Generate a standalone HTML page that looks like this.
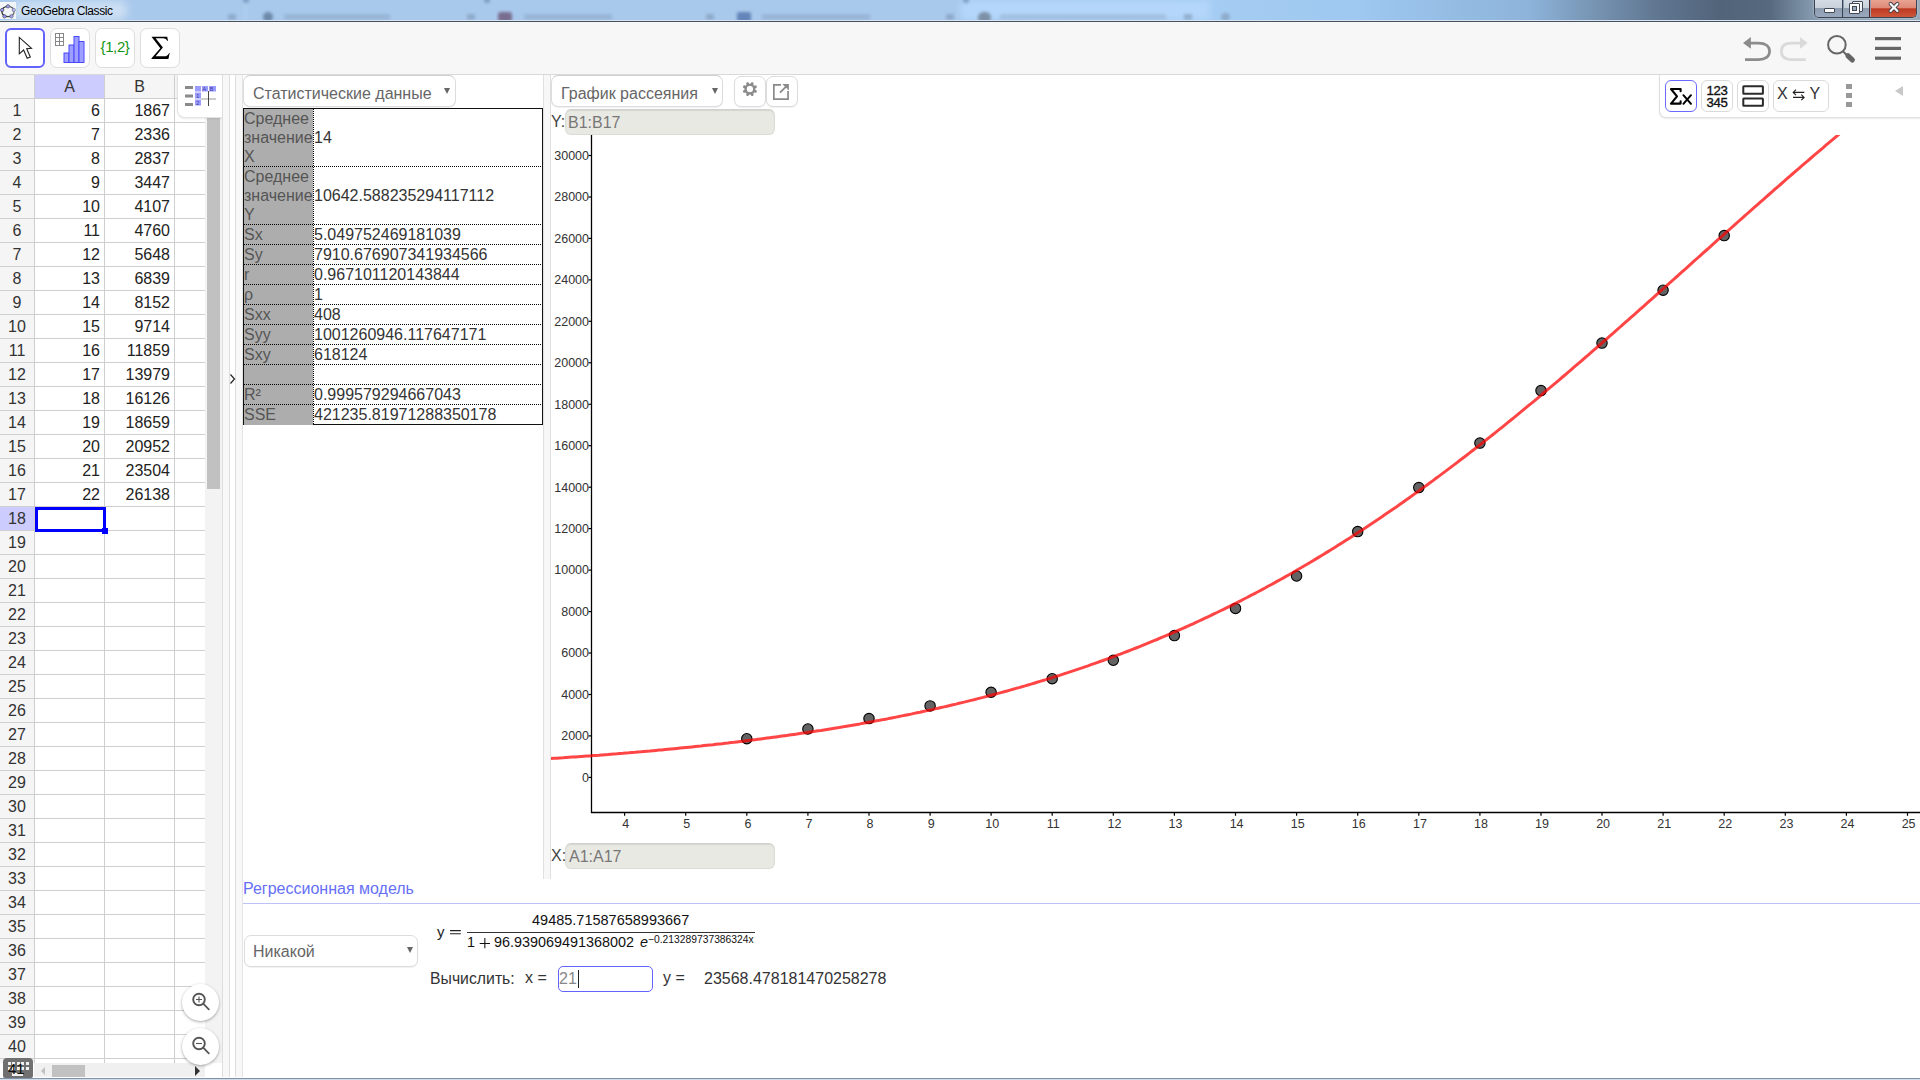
<!DOCTYPE html>
<html><head><meta charset="utf-8">
<style>
*{margin:0;padding:0;box-sizing:border-box}
html,body{width:1920px;height:1080px;overflow:hidden;background:#fff;font-family:"Liberation Sans",sans-serif;color:#333}
.a{position:absolute}
#title{left:0;top:0;width:1920px;height:22px;overflow:hidden;background:linear-gradient(90deg,#a9c9ec 0px,#a8c8ec 960px,#a6cdf3 1200px,#9ec8f0 1360px,#8db3da 1530px,#7896b5 1590px,#5f7590 1660px,#52647a 1720px,#56697f 1770px,#8599ae 1812px,#9aaabb 1920px)}
.blur{filter:blur(1.6px)}
.tbtn{position:absolute;top:28px;width:40px;height:40px;border:1px solid #dedede;border-radius:7px;background:#fff}
.hdr{position:absolute;background:#f5f5f5;color:#333;font-size:16px;text-align:center;line-height:23px}
.cv{position:absolute;font-size:16px;color:#222;text-align:right;line-height:23px}
.hl{position:absolute;left:0;width:205px;height:1px;background:#cfcfcf}
.vl{position:absolute;top:75px;width:1px;height:988px;background:#cfcfcf}
.dd{position:absolute;background:#fff;border:1px solid #dcdcdc;border-radius:7px;box-shadow:0 1px 1px rgba(0,0,0,0.06);font-size:16px;color:#666}
.dd .t{position:absolute;left:9px;top:6px;white-space:nowrap}
.dd .ar{position:absolute;width:0;height:0;border-left:3px solid transparent;border-right:3px solid transparent;border-top:6px solid #666}
.st{position:absolute;left:244px;width:298px;font-size:16px}
.sh{position:absolute;left:0;top:0;width:69px;height:100%;background:#adadad;color:#555;line-height:19px;white-space:nowrap;overflow:hidden}
.sv{position:absolute;left:70px;color:#333;white-space:nowrap}
.dot{position:absolute;left:0;width:298px;height:1px;background:repeating-linear-gradient(90deg,#000 0 1px,transparent 1px 2px)}
.sb{position:absolute;top:80px;width:32px;height:32px;border:1px solid #dadada;border-radius:6px;background:#fff}
.fld{position:absolute;left:565px;width:210px;height:26px;background:#e9e9e3;border:1px solid #dcdcd6;border-top-color:#d0d0cc;box-shadow:inset 0 1px 1px rgba(0,0,0,.08);border-radius:6px;color:#777;font-size:15px}
.tk{position:absolute;font-size:12px;color:#222;white-space:nowrap}
</style></head>
<body>
<div id="title" class="a">
 <div class="a" style="left:960px;top:0;width:250px;height:20px;background:#b3d6fa;filter:blur(3px)"></div>
 <div class="a blur" style="left:228px;top:14px;width:8px;height:6px;background:#7f98b5;opacity:.6"></div>
 <div class="a blur" style="left:244px;top:0;width:3px;height:20px;background:#c0dcf5;opacity:.3"></div>
 <div class="a blur" style="left:243px;top:-2px;width:6px;height:5px;border-radius:3px;background:#5f7fa8;opacity:.6"></div>
 <div class="a blur" style="left:263px;top:12px;width:10px;height:10px;border-radius:5px;background:#55708f;opacity:.7"></div>
 <div class="a blur" style="left:284px;top:14px;width:106px;height:6px;background:#8ca7c6;opacity:.55"></div>
 <div class="a blur" style="left:467px;top:14px;width:8px;height:6px;background:#7f98b5;opacity:.6"></div>
 <div class="a blur" style="left:484px;top:-2px;width:6px;height:5px;border-radius:3px;background:#5f7fa8;opacity:.6"></div>
 <div class="a blur" style="left:498px;top:12px;width:14px;height:10px;border-radius:3px;background:#6a5070;opacity:.75"></div>
 <div class="a blur" style="left:524px;top:14px;width:88px;height:6px;background:#8ca7c6;opacity:.55"></div>
 <div class="a blur" style="left:706px;top:14px;width:8px;height:6px;background:#7f98b5;opacity:.6"></div>
 <div class="a blur" style="left:737px;top:12px;width:14px;height:10px;border-radius:2px;background:#4d6fa8;opacity:.75"></div>
 <div class="a blur" style="left:762px;top:14px;width:108px;height:6px;background:#8ca7c6;opacity:.55"></div>
 <div class="a blur" style="left:946px;top:14px;width:8px;height:6px;background:#7f98b5;opacity:.6"></div>
 <div class="a blur" style="left:963px;top:-2px;width:6px;height:5px;border-radius:3px;background:#5f7fa8;opacity:.6"></div>
 <div class="a blur" style="left:978px;top:12px;width:13px;height:11px;border-radius:6px;background:#6b7a8c;opacity:.75"></div>
 <div class="a blur" style="left:1000px;top:14px;width:166px;height:6px;background:#97b3d2;opacity:.55"></div>
 <div class="a blur" style="left:1184px;top:14px;width:8px;height:6px;background:#7f98b5;opacity:.6"></div>
 <div class="a blur" style="left:1221px;top:13px;width:9px;height:8px;border-radius:4px;background:#7f98b5;opacity:.6"></div>
 <div class="a" style="left:0;top:2px;width:16px;height:17px;background:#f4f6f8"></div>
 <svg class="a" style="left:0;top:2px" width="18" height="18" viewBox="0 0 18 18">
  <ellipse cx="8" cy="9.5" rx="6.2" ry="5.2" fill="none" stroke="#333" stroke-width="1.3"/>
  <circle cx="8" cy="4.3" r="1.7" fill="#99f" stroke="#333" stroke-width=".6"/>
  <circle cx="2.2" cy="8" r="1.7" fill="#99f" stroke="#333" stroke-width=".6"/>
  <circle cx="13.8" cy="8" r="1.7" fill="#99f" stroke="#333" stroke-width=".6"/>
  <circle cx="4.5" cy="14.3" r="1.7" fill="#99f" stroke="#333" stroke-width=".6"/>
  <circle cx="11.5" cy="14.3" r="1.7" fill="#99f" stroke="#333" stroke-width=".6"/>
 </svg>
 <div class="a" style="left:12px;top:1px;width:115px;height:19px;background:rgba(235,243,250,.55);filter:blur(4px);border-radius:8px"></div><div class="a" style="left:21px;top:3.5px;font-size:12px;color:#000;white-space:nowrap;letter-spacing:-0.4px">GeoGebra Classic</div>
 <div class="a" style="left:1814px;top:-1px;width:103px;height:19px;border:1px solid #3b4452;border-top:none;border-radius:0 0 5px 5px;overflow:hidden;box-shadow:0 0 2px rgba(255,255,255,.7)">
  <div class="a" style="left:0;top:0;width:28px;height:19px;background:linear-gradient(#d6dde6 0%,#c9d1db 45%,#8f9db0 50%,#9aaac0 100%);border-right:1px solid #3b4452"></div>
  <div class="a" style="left:29px;top:0;width:26px;height:19px;background:linear-gradient(#d6dde6 0%,#c9d1db 45%,#8f9db0 50%,#9aaac0 100%);border-right:1px solid #50222a"></div>
  <div class="a" style="left:56px;top:0;width:47px;height:19px;background:linear-gradient(#e9a696 0%,#df8a78 45%,#bd3a22 52%,#cf5a3e 100%)"></div>
  <div class="a" style="left:9px;top:9px;width:11px;height:5px;background:#fafafa;border:1px solid #404858;border-radius:1px"></div>
  <div class="a" style="left:37px;top:2px;width:11px;height:11px;border:1px solid #404858;background:#f2f2f2;border-radius:1px"></div>
  <div class="a" style="left:34px;top:4px;width:11px;height:11px;border:1px solid #404858;background:#fafafa;border-radius:1px"></div>
  <div class="a" style="left:37px;top:7px;width:5px;height:5px;border:1px solid #404858;background:#9aaabb"></div>
  <svg class="a" style="left:71px;top:2px" width="16" height="13" viewBox="0 0 16 13"><path d="M4.6 2.9 L11.4 9.9 M11.4 2.9 L4.6 9.9" stroke="#3a3f4a" stroke-width="4" stroke-linecap="round"/><path d="M4.6 2.9 L11.4 9.9 M11.4 2.9 L4.6 9.9" stroke="#fafafa" stroke-width="2.2" stroke-linecap="round"/></svg>
 </div>
 <div class="a" style="left:0;top:20px;width:1920px;height:1px;background:#d8e4f0"></div>
 <div class="a" style="left:0;top:21px;width:1920px;height:1px;background:#46525f"></div>
</div>
<div class="a" style="left:0;top:22px;width:1920px;height:53px;background:#f7f7f7;border-bottom:1px solid #d9d9d9"></div>
<div class="tbtn" style="left:5px;border:2.5px solid #6262ff;border-radius:6px"></div>
<svg class="a" style="left:17px;top:35px" width="18" height="26" viewBox="0 0 18 26"><path d="M2.3 2.4 L2.3 18.8 L6.6 15 L10.2 23.2 L13.3 22 L9.7 13.7 L14.5 13.3 Z" fill="#fff" stroke="#222" stroke-width="1.1" stroke-linejoin="miter"/></svg>
<div class="tbtn" style="left:50px"></div>
<svg class="a" style="left:50px;top:28px" width="40" height="40" viewBox="0 0 40 40">
 <rect x="5.5" y="5.5" width="8" height="12" fill="#fff" stroke="#888" stroke-width="1"/>
 <path d="M9.5 5.5 V17.5 M5.5 9.5 H13.5 M5.5 13.5 H13.5" stroke="#888" stroke-width="1"/>
 <rect x="14" y="25" width="5" height="9.5" fill="#9f9fff" stroke="#4848ff" stroke-width="1"/>
 <rect x="19" y="17" width="5" height="17.5" fill="#9f9fff" stroke="#4848ff" stroke-width="1"/>
 <rect x="24" y="8.5" width="5" height="26" fill="#9f9fff" stroke="#4848ff" stroke-width="1"/>
 <rect x="29" y="13.5" width="5" height="21" fill="#9f9fff" stroke="#4848ff" stroke-width="1"/>
</svg>
<div class="tbtn" style="left:95px"></div>
<div class="a" style="left:99px;top:37.5px;width:32px;text-align:center;font-size:15px;color:#149614;white-space:nowrap;letter-spacing:-0.4px">{1,2}</div>
<div class="tbtn" style="left:140px"></div>
<svg class="a" style="left:140px;top:28px" width="40" height="40" viewBox="140 28 40 40"><path d="M151.5 36.8 H167.2 L168 40.8 H167.2 Q166.3 38.3 163.5 38.3 H155.6 L162.9 47.5 L155.6 56.2 H165.8 Q167.8 56.2 169.2 53 H169.7 L168.4 58.9 H151.5 V58.3 L160.3 48.3 Z" fill="#000"/></svg>
<!-- right toolbar -->
<svg class="a" style="left:1736px;top:30px" width="180" height="40" viewBox="1736 30 180 40">
 <path d="M1749 43.2 H1758.5 C1765.5 43.2 1769.6 46.2 1769.6 51.3 C1769.6 56.5 1765.5 59.6 1758.5 59.6 H1745" fill="none" stroke="#8c8c8c" stroke-width="2.7"/>
 <path d="M1743 43 L1750.9 37 L1750.9 48.8 Z" fill="#8c8c8c"/>
 <path d="M1800.5 43.2 H1791.5 C1784.5 43.2 1781.4 46.2 1781.4 51.3 C1781.4 56.5 1784.5 59.6 1791.5 59.6 H1805.8" fill="none" stroke="#dadada" stroke-width="2.7"/>
 <path d="M1807.6 43 L1800 37 L1800 48.8 Z" fill="#dadada"/>
 <circle cx="1836.9" cy="44.8" r="8.8" fill="none" stroke="#666" stroke-width="2"/>
 <path d="M1842.8 51.2 L1847 55.2" stroke="#666" stroke-width="2"/><path d="M1848 55.8 L1852.3 59.9" stroke="#666" stroke-width="5.2" stroke-linecap="round"/>
 <rect x="1875" y="37" width="26" height="3.2" fill="#666"/>
 <rect x="1875" y="46.8" width="26" height="3.2" fill="#666"/>
 <rect x="1875" y="56.6" width="26" height="3.2" fill="#666"/>
</svg>
<div class="a" style="left:0;top:75px;width:205px;height:988px;background:#fff;overflow:hidden">
<div class="hdr" style="left:0;top:0;width:34px;height:23px"></div>
<div class="hdr" style="left:35px;top:0;width:69px;height:23px;background:#ccccff">A</div>
<div class="hdr" style="left:105px;top:0;width:69px;height:23px">B</div>
<div class="hdr" style="left:175px;top:0;width:30px;height:23px"></div>
<div class="hdr" style="left:0;top:24px;width:34px;height:23px;background:#f5f5f5">1</div>
<div class="cv" style="left:35px;top:24px;width:65px;height:23px">6</div>
<div class="cv" style="left:105px;top:24px;width:65px;height:23px">1867</div>
<div class="hdr" style="left:0;top:48px;width:34px;height:23px;background:#f5f5f5">2</div>
<div class="cv" style="left:35px;top:48px;width:65px;height:23px">7</div>
<div class="cv" style="left:105px;top:48px;width:65px;height:23px">2336</div>
<div class="hdr" style="left:0;top:72px;width:34px;height:23px;background:#f5f5f5">3</div>
<div class="cv" style="left:35px;top:72px;width:65px;height:23px">8</div>
<div class="cv" style="left:105px;top:72px;width:65px;height:23px">2837</div>
<div class="hdr" style="left:0;top:96px;width:34px;height:23px;background:#f5f5f5">4</div>
<div class="cv" style="left:35px;top:96px;width:65px;height:23px">9</div>
<div class="cv" style="left:105px;top:96px;width:65px;height:23px">3447</div>
<div class="hdr" style="left:0;top:120px;width:34px;height:23px;background:#f5f5f5">5</div>
<div class="cv" style="left:35px;top:120px;width:65px;height:23px">10</div>
<div class="cv" style="left:105px;top:120px;width:65px;height:23px">4107</div>
<div class="hdr" style="left:0;top:144px;width:34px;height:23px;background:#f5f5f5">6</div>
<div class="cv" style="left:35px;top:144px;width:65px;height:23px">11</div>
<div class="cv" style="left:105px;top:144px;width:65px;height:23px">4760</div>
<div class="hdr" style="left:0;top:168px;width:34px;height:23px;background:#f5f5f5">7</div>
<div class="cv" style="left:35px;top:168px;width:65px;height:23px">12</div>
<div class="cv" style="left:105px;top:168px;width:65px;height:23px">5648</div>
<div class="hdr" style="left:0;top:192px;width:34px;height:23px;background:#f5f5f5">8</div>
<div class="cv" style="left:35px;top:192px;width:65px;height:23px">13</div>
<div class="cv" style="left:105px;top:192px;width:65px;height:23px">6839</div>
<div class="hdr" style="left:0;top:216px;width:34px;height:23px;background:#f5f5f5">9</div>
<div class="cv" style="left:35px;top:216px;width:65px;height:23px">14</div>
<div class="cv" style="left:105px;top:216px;width:65px;height:23px">8152</div>
<div class="hdr" style="left:0;top:240px;width:34px;height:23px;background:#f5f5f5">10</div>
<div class="cv" style="left:35px;top:240px;width:65px;height:23px">15</div>
<div class="cv" style="left:105px;top:240px;width:65px;height:23px">9714</div>
<div class="hdr" style="left:0;top:264px;width:34px;height:23px;background:#f5f5f5">11</div>
<div class="cv" style="left:35px;top:264px;width:65px;height:23px">16</div>
<div class="cv" style="left:105px;top:264px;width:65px;height:23px">11859</div>
<div class="hdr" style="left:0;top:288px;width:34px;height:23px;background:#f5f5f5">12</div>
<div class="cv" style="left:35px;top:288px;width:65px;height:23px">17</div>
<div class="cv" style="left:105px;top:288px;width:65px;height:23px">13979</div>
<div class="hdr" style="left:0;top:312px;width:34px;height:23px;background:#f5f5f5">13</div>
<div class="cv" style="left:35px;top:312px;width:65px;height:23px">18</div>
<div class="cv" style="left:105px;top:312px;width:65px;height:23px">16126</div>
<div class="hdr" style="left:0;top:336px;width:34px;height:23px;background:#f5f5f5">14</div>
<div class="cv" style="left:35px;top:336px;width:65px;height:23px">19</div>
<div class="cv" style="left:105px;top:336px;width:65px;height:23px">18659</div>
<div class="hdr" style="left:0;top:360px;width:34px;height:23px;background:#f5f5f5">15</div>
<div class="cv" style="left:35px;top:360px;width:65px;height:23px">20</div>
<div class="cv" style="left:105px;top:360px;width:65px;height:23px">20952</div>
<div class="hdr" style="left:0;top:384px;width:34px;height:23px;background:#f5f5f5">16</div>
<div class="cv" style="left:35px;top:384px;width:65px;height:23px">21</div>
<div class="cv" style="left:105px;top:384px;width:65px;height:23px">23504</div>
<div class="hdr" style="left:0;top:408px;width:34px;height:23px;background:#f5f5f5">17</div>
<div class="cv" style="left:35px;top:408px;width:65px;height:23px">22</div>
<div class="cv" style="left:105px;top:408px;width:65px;height:23px">26138</div>
<div class="hdr" style="left:0;top:432px;width:34px;height:23px;background:#ccccff">18</div>
<div class="hdr" style="left:0;top:456px;width:34px;height:23px;background:#f5f5f5">19</div>
<div class="hdr" style="left:0;top:480px;width:34px;height:23px;background:#f5f5f5">20</div>
<div class="hdr" style="left:0;top:504px;width:34px;height:23px;background:#f5f5f5">21</div>
<div class="hdr" style="left:0;top:528px;width:34px;height:23px;background:#f5f5f5">22</div>
<div class="hdr" style="left:0;top:552px;width:34px;height:23px;background:#f5f5f5">23</div>
<div class="hdr" style="left:0;top:576px;width:34px;height:23px;background:#f5f5f5">24</div>
<div class="hdr" style="left:0;top:600px;width:34px;height:23px;background:#f5f5f5">25</div>
<div class="hdr" style="left:0;top:624px;width:34px;height:23px;background:#f5f5f5">26</div>
<div class="hdr" style="left:0;top:648px;width:34px;height:23px;background:#f5f5f5">27</div>
<div class="hdr" style="left:0;top:672px;width:34px;height:23px;background:#f5f5f5">28</div>
<div class="hdr" style="left:0;top:696px;width:34px;height:23px;background:#f5f5f5">29</div>
<div class="hdr" style="left:0;top:720px;width:34px;height:23px;background:#f5f5f5">30</div>
<div class="hdr" style="left:0;top:744px;width:34px;height:23px;background:#f5f5f5">31</div>
<div class="hdr" style="left:0;top:768px;width:34px;height:23px;background:#f5f5f5">32</div>
<div class="hdr" style="left:0;top:792px;width:34px;height:23px;background:#f5f5f5">33</div>
<div class="hdr" style="left:0;top:816px;width:34px;height:23px;background:#f5f5f5">34</div>
<div class="hdr" style="left:0;top:840px;width:34px;height:23px;background:#f5f5f5">35</div>
<div class="hdr" style="left:0;top:864px;width:34px;height:23px;background:#f5f5f5">36</div>
<div class="hdr" style="left:0;top:888px;width:34px;height:23px;background:#f5f5f5">37</div>
<div class="hdr" style="left:0;top:912px;width:34px;height:23px;background:#f5f5f5">38</div>
<div class="hdr" style="left:0;top:936px;width:34px;height:23px;background:#f5f5f5">39</div>
<div class="hdr" style="left:0;top:960px;width:34px;height:23px;background:#f5f5f5">40</div>
<div class="hdr" style="left:0;top:984px;width:34px;height:23px;background:#f5f5f5">41</div>
<div class="hl" style="top:23px"></div>
<div class="hl" style="top:47px"></div>
<div class="hl" style="top:71px"></div>
<div class="hl" style="top:95px"></div>
<div class="hl" style="top:119px"></div>
<div class="hl" style="top:143px"></div>
<div class="hl" style="top:167px"></div>
<div class="hl" style="top:191px"></div>
<div class="hl" style="top:215px"></div>
<div class="hl" style="top:239px"></div>
<div class="hl" style="top:263px"></div>
<div class="hl" style="top:287px"></div>
<div class="hl" style="top:311px"></div>
<div class="hl" style="top:335px"></div>
<div class="hl" style="top:359px"></div>
<div class="hl" style="top:383px"></div>
<div class="hl" style="top:407px"></div>
<div class="hl" style="top:431px"></div>
<div class="hl" style="top:455px"></div>
<div class="hl" style="top:479px"></div>
<div class="hl" style="top:503px"></div>
<div class="hl" style="top:527px"></div>
<div class="hl" style="top:551px"></div>
<div class="hl" style="top:575px"></div>
<div class="hl" style="top:599px"></div>
<div class="hl" style="top:623px"></div>
<div class="hl" style="top:647px"></div>
<div class="hl" style="top:671px"></div>
<div class="hl" style="top:695px"></div>
<div class="hl" style="top:719px"></div>
<div class="hl" style="top:743px"></div>
<div class="hl" style="top:767px"></div>
<div class="hl" style="top:791px"></div>
<div class="hl" style="top:815px"></div>
<div class="hl" style="top:839px"></div>
<div class="hl" style="top:863px"></div>
<div class="hl" style="top:887px"></div>
<div class="hl" style="top:911px"></div>
<div class="hl" style="top:935px"></div>
<div class="hl" style="top:959px"></div>
<div class="hl" style="top:983px"></div>
<div class="hl" style="top:1007px"></div>
<div class="a" style="left:34px;top:0;width:1px;height:988px;background:#cfcfcf"></div>
<div class="a" style="left:104px;top:0;width:1px;height:988px;background:#cfcfcf"></div>
<div class="a" style="left:174px;top:0;width:1px;height:988px;background:#cfcfcf"></div>
</div>
<div class="a" style="left:35px;top:507px;width:71px;height:25px;border:3px solid #0000ff"></div>
<div class="a" style="left:102px;top:528px;width:6px;height:6px;background:#0000ff"></div>
<div class="a" style="left:205px;top:75px;width:17px;height:988px;background:#f3f3f3"></div>
<div class="a" style="left:207px;top:75px;width:13px;height:414px;background:#c1c1c1"></div>
<div class="a" style="left:34px;top:1063px;width:171px;height:14px;background:#f0f0f0"></div>
<div class="a" style="left:205px;top:1063px;width:17px;height:14px;background:#fff"></div>
<div class="a" style="left:52px;top:1065px;width:33px;height:12px;background:#c1c1c1"></div>
<div class="a" style="left:41px;top:1067px;width:0;height:0;border-top:4px solid transparent;border-bottom:4px solid transparent;border-right:4px solid #c0c0c0"></div>
<div class="a" style="left:195px;top:1066px;width:0;height:0;border-top:5px solid transparent;border-bottom:5px solid transparent;border-left:5px solid #333"></div>
<div class="a" style="left:3px;top:1057.5px;width:30px;height:20px;background:#707070;border-radius:4px 4px 2px 2px"></div>
<div class="a" style="left:7.5px;top:1062.0px;width:3px;height:3px;background:#f0f0f0"></div>
<div class="a" style="left:12.0px;top:1062.0px;width:3px;height:3px;background:#f0f0f0"></div>
<div class="a" style="left:16.5px;top:1062.0px;width:3px;height:3px;background:#f0f0f0"></div>
<div class="a" style="left:21.0px;top:1062.0px;width:3px;height:3px;background:#f0f0f0"></div>
<div class="a" style="left:25.5px;top:1062.0px;width:3px;height:3px;background:#f0f0f0"></div>
<div class="a" style="left:7.5px;top:1066.5px;width:3px;height:3px;background:#f0f0f0"></div>
<div class="a" style="left:12.0px;top:1066.5px;width:3px;height:3px;background:#f0f0f0"></div>
<div class="a" style="left:16.5px;top:1066.5px;width:3px;height:3px;background:#f0f0f0"></div>
<div class="a" style="left:21.0px;top:1066.5px;width:3px;height:3px;background:#f0f0f0"></div>
<div class="a" style="left:25.5px;top:1066.5px;width:3px;height:3px;background:#f0f0f0"></div>
<div class="a" style="left:12px;top:1073px;width:11px;height:2.5px;background:#f0f0f0"></div>
<div class="a" style="left:8px;top:1060px;font-size:15px;color:#111;line-height:18px;height:17px;overflow:hidden">41</div>
<div class="a" style="left:182px;top:984px;width:37px;height:37px;border-radius:50%;background:#fff;box-shadow:0 1px 3px rgba(0,0,0,.35)"></div>
<svg class="a" style="left:182px;top:984px" width="37" height="37" viewBox="182 984 37 37"><circle cx="199" cy="999.5" r="5.8" fill="none" stroke="#555" stroke-width="1.9"/><path d="M203.2 1003.7 L208.8 1009.3" stroke="#555" stroke-width="1.8" stroke-linecap="round"/><path d="M196 999.5 H202 M199 996.5 V1002.5" stroke="#555" stroke-width="1.1"/></svg>
<div class="a" style="left:182px;top:1028px;width:37px;height:37px;border-radius:50%;background:#fff;box-shadow:0 1px 3px rgba(0,0,0,.35)"></div>
<svg class="a" style="left:182px;top:1028px" width="37" height="37" viewBox="182 1028 37 37"><circle cx="199" cy="1043.5" r="5.8" fill="none" stroke="#555" stroke-width="1.9"/><path d="M203.2 1047.7 L208.8 1053.3" stroke="#555" stroke-width="1.8" stroke-linecap="round"/><path d="M196 1043.5 H202" stroke="#555" stroke-width="1.1"/></svg>
<div class="a" style="left:177px;top:75px;width:46px;height:43px;background:#fff;border:1px solid #e3e3e3;border-top:none;border-radius:0 0 0 8px;box-shadow:0 1px 2px rgba(0,0,0,.08)"></div>
<svg class="a" style="left:177px;top:75px" width="46" height="42" viewBox="177 75 46 42">
 <rect x="185" y="86" width="8" height="3" fill="#8a8a8a"/><rect x="185" y="94.5" width="8" height="3" fill="#8a8a8a"/><rect x="185" y="103" width="8" height="3" fill="#8a8a8a"/>
 <rect x="195" y="86" width="6" height="5.5" fill="#9c9cff"/><rect x="195" y="92.5" width="6" height="6" fill="#9c9cff"/><rect x="195" y="99.5" width="6" height="6" fill="#9c9cff"/>
 <rect x="202" y="86" width="6" height="5.5" fill="#9c9cff"/><rect x="209" y="86" width="7" height="5.5" fill="#9c9cff"/>
 <path d="M201 99 H216" stroke="#999" stroke-width="1"/><path d="M208.5 91 V106" stroke="#444" stroke-width="1"/>
 <text x="196.3" y="97.8" font-size="5.5" fill="#3a3a9a" font-family="Liberation Sans">1</text>
 <text x="196.3" y="104.8" font-size="5.5" fill="#3a3a9a" font-family="Liberation Sans">2</text>
 <text x="202.5" y="90.8" font-size="5.5" fill="#3a3a9a" font-family="Liberation Sans">A</text>
 <text x="209.8" y="90.8" font-size="5.5" fill="#3a3a9a" font-family="Liberation Sans">B</text>
</svg>
<div class="a" style="left:222px;top:75px;width:21px;height:1002px;background:#f8f8f8"></div>
<div class="a" style="left:222px;top:75px;width:1px;height:1002px;background:#dedede"></div>
<div class="a" style="left:229px;top:75px;width:1px;height:1002px;background:#dedede"></div>
<div class="a" style="left:230px;top:75px;width:5px;height:1002px;background:#fff"></div>
<div class="a" style="left:235px;top:75px;width:1px;height:1002px;background:#dedede"></div>
<div class="a" style="left:242px;top:75px;width:1px;height:1002px;background:#e4e4e4"></div>
<svg class="a" style="left:229px;top:373px" width="8" height="12" viewBox="0 0 8 12"><path d="M1.5 1.5 L5.5 6 L1.5 10.5" fill="none" stroke="#222" stroke-width="1.2"/></svg><div class="a" style="left:243px;top:75px;width:300px;height:803px;background:#fff"></div>
<div class="dd" style="left:243px;top:75px;width:213px;height:32px;border-top-color:#d0d0d0"><div class="t" style="top:8.5px">Статистические данные</div><div class="ar" style="left:200px;top:12px"></div></div>
<div class="a" style="left:243px;top:108px;width:300px;height:317px;border:1px solid #111;background:#fff"></div>
<div class="st" style="top:109px;height:58px">
<div class="sh" style="padding-top:0px">Среднее<br>значение<br>X</div>
<div class="sv" style="top:19px;line-height:19px">14</div>
</div>
<div class="dot" style="left:244px;top:166px"></div>
<div class="st" style="top:167px;height:58px">
<div class="sh" style="padding-top:0px">Среднее<br>значение<br>Y</div>
<div class="sv" style="top:19px;line-height:19px">10642.588235294117112</div>
</div>
<div class="dot" style="left:244px;top:224px"></div>
<div class="st" style="top:225px;height:20px">
<div class="sh" style="padding-top:0px">Sx</div>
<div class="sv" style="top:0;line-height:19px">5.049752469181039</div>
</div>
<div class="dot" style="left:244px;top:244px"></div>
<div class="st" style="top:245px;height:20px">
<div class="sh" style="padding-top:0px">Sy</div>
<div class="sv" style="top:0;line-height:19px">7910.676907341934566</div>
</div>
<div class="dot" style="left:244px;top:264px"></div>
<div class="st" style="top:265px;height:20px">
<div class="sh" style="padding-top:0px">r</div>
<div class="sv" style="top:0;line-height:19px">0.967101120143844</div>
</div>
<div class="dot" style="left:244px;top:284px"></div>
<div class="st" style="top:285px;height:20px">
<div class="sh" style="padding-top:0px">ρ</div>
<div class="sv" style="top:0;line-height:19px">1</div>
</div>
<div class="dot" style="left:244px;top:304px"></div>
<div class="st" style="top:305px;height:20px">
<div class="sh" style="padding-top:0px">Sxx</div>
<div class="sv" style="top:0;line-height:19px">408</div>
</div>
<div class="dot" style="left:244px;top:324px"></div>
<div class="st" style="top:325px;height:20px">
<div class="sh" style="padding-top:0px">Syy</div>
<div class="sv" style="top:0;line-height:19px">1001260946.117647171</div>
</div>
<div class="dot" style="left:244px;top:344px"></div>
<div class="st" style="top:345px;height:20px">
<div class="sh" style="padding-top:0px">Sxy</div>
<div class="sv" style="top:0;line-height:19px">618124</div>
</div>
<div class="dot" style="left:244px;top:364px"></div>
<div class="st" style="top:365px;height:20px">
<div class="sh" style="padding-top:0px"></div>
<div class="sv" style="top:0;line-height:19px"></div>
</div>
<div class="dot" style="left:244px;top:384px"></div>
<div class="st" style="top:385px;height:20px">
<div class="sh" style="padding-top:0px">R²</div>
<div class="sv" style="top:0;line-height:19px">0.999579294667043</div>
</div>
<div class="dot" style="left:244px;top:404px"></div>
<div class="st" style="top:405px;height:20px">
<div class="sh" style="padding-top:0px">SSE</div>
<div class="sv" style="top:0;line-height:19px">421235.81971288350178</div>
</div>
<div class="a" style="left:313px;top:109px;width:1px;height:315px;background:repeating-linear-gradient(180deg,#000 0 1px,transparent 1px 2px)"></div>
<div class="a" style="left:543px;top:75px;width:8px;height:804px;background:#f7f7f7;border-left:1px solid #e0e0e0;border-right:1px solid #e0e0e0"></div><div class="a" style="left:551px;top:75px;width:1369px;height:804px;background:#fff"></div>
<svg class="a" style="left:551px;top:75px" width="1369" height="804" viewBox="551 75 1369 804">
<path d="M591.5 135 V812.5 H1920" fill="none" stroke="#000" stroke-width="1.3"/>
<path d="M588.5 777.4 H591" stroke="#000" stroke-width="1.2"/>
<text x="589" y="781.7" font-size="12.5" text-anchor="end" fill="#333" font-family="Liberation Sans">0</text>
<path d="M588.5 735.9 H591" stroke="#000" stroke-width="1.2"/>
<text x="589" y="740.2" font-size="12.5" text-anchor="end" fill="#333" font-family="Liberation Sans">2000</text>
<path d="M588.5 694.5 H591" stroke="#000" stroke-width="1.2"/>
<text x="589" y="698.8" font-size="12.5" text-anchor="end" fill="#333" font-family="Liberation Sans">4000</text>
<path d="M588.5 653.0 H591" stroke="#000" stroke-width="1.2"/>
<text x="589" y="657.3" font-size="12.5" text-anchor="end" fill="#333" font-family="Liberation Sans">6000</text>
<path d="M588.5 611.6 H591" stroke="#000" stroke-width="1.2"/>
<text x="589" y="615.9" font-size="12.5" text-anchor="end" fill="#333" font-family="Liberation Sans">8000</text>
<path d="M588.5 570.1 H591" stroke="#000" stroke-width="1.2"/>
<text x="589" y="574.4" font-size="12.5" text-anchor="end" fill="#333" font-family="Liberation Sans">10000</text>
<path d="M588.5 528.6 H591" stroke="#000" stroke-width="1.2"/>
<text x="589" y="532.9" font-size="12.5" text-anchor="end" fill="#333" font-family="Liberation Sans">12000</text>
<path d="M588.5 487.2 H591" stroke="#000" stroke-width="1.2"/>
<text x="589" y="491.5" font-size="12.5" text-anchor="end" fill="#333" font-family="Liberation Sans">14000</text>
<path d="M588.5 445.7 H591" stroke="#000" stroke-width="1.2"/>
<text x="589" y="450.0" font-size="12.5" text-anchor="end" fill="#333" font-family="Liberation Sans">16000</text>
<path d="M588.5 404.3 H591" stroke="#000" stroke-width="1.2"/>
<text x="589" y="408.6" font-size="12.5" text-anchor="end" fill="#333" font-family="Liberation Sans">18000</text>
<path d="M588.5 362.8 H591" stroke="#000" stroke-width="1.2"/>
<text x="589" y="367.1" font-size="12.5" text-anchor="end" fill="#333" font-family="Liberation Sans">20000</text>
<path d="M588.5 321.3 H591" stroke="#000" stroke-width="1.2"/>
<text x="589" y="325.6" font-size="12.5" text-anchor="end" fill="#333" font-family="Liberation Sans">22000</text>
<path d="M588.5 279.9 H591" stroke="#000" stroke-width="1.2"/>
<text x="589" y="284.2" font-size="12.5" text-anchor="end" fill="#333" font-family="Liberation Sans">24000</text>
<path d="M588.5 238.4 H591" stroke="#000" stroke-width="1.2"/>
<text x="589" y="242.7" font-size="12.5" text-anchor="end" fill="#333" font-family="Liberation Sans">26000</text>
<path d="M588.5 197.0 H591" stroke="#000" stroke-width="1.2"/>
<text x="589" y="201.3" font-size="12.5" text-anchor="end" fill="#333" font-family="Liberation Sans">28000</text>
<path d="M588.5 155.5 H591" stroke="#000" stroke-width="1.2"/>
<text x="589" y="159.8" font-size="12.5" text-anchor="end" fill="#333" font-family="Liberation Sans">30000</text>
<path d="M624.6 812.5 V815.8" stroke="#000" stroke-width="1.2"/>
<text x="625.7" y="828" font-size="12.5" text-anchor="middle" fill="#333" font-family="Liberation Sans">4</text>
<path d="M685.7 812.5 V815.8" stroke="#000" stroke-width="1.2"/>
<text x="686.8" y="828" font-size="12.5" text-anchor="middle" fill="#333" font-family="Liberation Sans">5</text>
<path d="M746.8 812.5 V815.8" stroke="#000" stroke-width="1.2"/>
<text x="747.9" y="828" font-size="12.5" text-anchor="middle" fill="#333" font-family="Liberation Sans">6</text>
<path d="M807.9 812.5 V815.8" stroke="#000" stroke-width="1.2"/>
<text x="809.0" y="828" font-size="12.5" text-anchor="middle" fill="#333" font-family="Liberation Sans">7</text>
<path d="M869.0 812.5 V815.8" stroke="#000" stroke-width="1.2"/>
<text x="870.1" y="828" font-size="12.5" text-anchor="middle" fill="#333" font-family="Liberation Sans">8</text>
<path d="M930.1 812.5 V815.8" stroke="#000" stroke-width="1.2"/>
<text x="931.2" y="828" font-size="12.5" text-anchor="middle" fill="#333" font-family="Liberation Sans">9</text>
<path d="M991.1 812.5 V815.8" stroke="#000" stroke-width="1.2"/>
<text x="992.2" y="828" font-size="12.5" text-anchor="middle" fill="#333" font-family="Liberation Sans">10</text>
<path d="M1052.2 812.5 V815.8" stroke="#000" stroke-width="1.2"/>
<text x="1053.3" y="828" font-size="12.5" text-anchor="middle" fill="#333" font-family="Liberation Sans">11</text>
<path d="M1113.3 812.5 V815.8" stroke="#000" stroke-width="1.2"/>
<text x="1114.4" y="828" font-size="12.5" text-anchor="middle" fill="#333" font-family="Liberation Sans">12</text>
<path d="M1174.4 812.5 V815.8" stroke="#000" stroke-width="1.2"/>
<text x="1175.5" y="828" font-size="12.5" text-anchor="middle" fill="#333" font-family="Liberation Sans">13</text>
<path d="M1235.5 812.5 V815.8" stroke="#000" stroke-width="1.2"/>
<text x="1236.6" y="828" font-size="12.5" text-anchor="middle" fill="#333" font-family="Liberation Sans">14</text>
<path d="M1296.6 812.5 V815.8" stroke="#000" stroke-width="1.2"/>
<text x="1297.7" y="828" font-size="12.5" text-anchor="middle" fill="#333" font-family="Liberation Sans">15</text>
<path d="M1357.7 812.5 V815.8" stroke="#000" stroke-width="1.2"/>
<text x="1358.8" y="828" font-size="12.5" text-anchor="middle" fill="#333" font-family="Liberation Sans">16</text>
<path d="M1418.8 812.5 V815.8" stroke="#000" stroke-width="1.2"/>
<text x="1419.9" y="828" font-size="12.5" text-anchor="middle" fill="#333" font-family="Liberation Sans">17</text>
<path d="M1479.9 812.5 V815.8" stroke="#000" stroke-width="1.2"/>
<text x="1481.0" y="828" font-size="12.5" text-anchor="middle" fill="#333" font-family="Liberation Sans">18</text>
<path d="M1541.0 812.5 V815.8" stroke="#000" stroke-width="1.2"/>
<text x="1542.0" y="828" font-size="12.5" text-anchor="middle" fill="#333" font-family="Liberation Sans">19</text>
<path d="M1602.0 812.5 V815.8" stroke="#000" stroke-width="1.2"/>
<text x="1603.1" y="828" font-size="12.5" text-anchor="middle" fill="#333" font-family="Liberation Sans">20</text>
<path d="M1663.1 812.5 V815.8" stroke="#000" stroke-width="1.2"/>
<text x="1664.2" y="828" font-size="12.5" text-anchor="middle" fill="#333" font-family="Liberation Sans">21</text>
<path d="M1724.2 812.5 V815.8" stroke="#000" stroke-width="1.2"/>
<text x="1725.3" y="828" font-size="12.5" text-anchor="middle" fill="#333" font-family="Liberation Sans">22</text>
<path d="M1785.3 812.5 V815.8" stroke="#000" stroke-width="1.2"/>
<text x="1786.4" y="828" font-size="12.5" text-anchor="middle" fill="#333" font-family="Liberation Sans">23</text>
<path d="M1846.4 812.5 V815.8" stroke="#000" stroke-width="1.2"/>
<text x="1847.5" y="828" font-size="12.5" text-anchor="middle" fill="#333" font-family="Liberation Sans">24</text>
<path d="M1907.5 812.5 V815.8" stroke="#000" stroke-width="1.2"/>
<text x="1908.6" y="828" font-size="12.5" text-anchor="middle" fill="#333" font-family="Liberation Sans">25</text>
<circle cx="746.8" cy="738.7" r="5.2" fill="#636363" stroke="#000" stroke-width="1.1"/>
<circle cx="807.9" cy="729.0" r="5.2" fill="#636363" stroke="#000" stroke-width="1.1"/>
<circle cx="869.0" cy="718.6" r="5.2" fill="#636363" stroke="#000" stroke-width="1.1"/>
<circle cx="930.1" cy="705.9" r="5.2" fill="#636363" stroke="#000" stroke-width="1.1"/>
<circle cx="991.1" cy="692.3" r="5.2" fill="#636363" stroke="#000" stroke-width="1.1"/>
<circle cx="1052.2" cy="678.7" r="5.2" fill="#636363" stroke="#000" stroke-width="1.1"/>
<circle cx="1113.3" cy="660.3" r="5.2" fill="#636363" stroke="#000" stroke-width="1.1"/>
<circle cx="1174.4" cy="635.6" r="5.2" fill="#636363" stroke="#000" stroke-width="1.1"/>
<circle cx="1235.5" cy="608.4" r="5.2" fill="#636363" stroke="#000" stroke-width="1.1"/>
<circle cx="1296.6" cy="576.0" r="5.2" fill="#636363" stroke="#000" stroke-width="1.1"/>
<circle cx="1357.7" cy="531.6" r="5.2" fill="#636363" stroke="#000" stroke-width="1.1"/>
<circle cx="1418.8" cy="487.6" r="5.2" fill="#636363" stroke="#000" stroke-width="1.1"/>
<circle cx="1479.9" cy="443.1" r="5.2" fill="#636363" stroke="#000" stroke-width="1.1"/>
<circle cx="1541.0" cy="390.6" r="5.2" fill="#636363" stroke="#000" stroke-width="1.1"/>
<circle cx="1602.0" cy="343.1" r="5.2" fill="#636363" stroke="#000" stroke-width="1.1"/>
<circle cx="1663.1" cy="290.2" r="5.2" fill="#636363" stroke="#000" stroke-width="1.1"/>
<circle cx="1724.2" cy="235.6" r="5.2" fill="#636363" stroke="#000" stroke-width="1.1"/>
<clipPath id="pc"><rect x="551" y="135" width="1369" height="743"/></clipPath>
<path clip-path="url(#pc)" d="M551.0 758.5 L554.0 758.3 L557.0 758.2 L560.0 758.0 L563.0 757.8 L566.0 757.5 L569.0 757.3 L572.0 757.1 L575.0 756.9 L578.0 756.7 L581.0 756.5 L584.0 756.3 L587.0 756.1 L590.0 755.9 L593.0 755.6 L596.0 755.4 L599.0 755.2 L602.0 754.9 L605.0 754.7 L608.0 754.5 L611.0 754.2 L614.0 754.0 L617.0 753.8 L620.0 753.5 L623.0 753.3 L626.0 753.0 L629.0 752.8 L632.0 752.5 L635.0 752.3 L638.0 752.0 L641.0 751.8 L644.0 751.5 L647.0 751.2 L650.0 751.0 L653.0 750.7 L656.0 750.4 L659.0 750.1 L662.0 749.9 L665.0 749.6 L668.0 749.3 L671.0 749.0 L674.0 748.7 L677.0 748.4 L680.0 748.1 L683.0 747.8 L686.0 747.5 L689.0 747.2 L692.0 746.9 L695.0 746.6 L698.0 746.3 L701.0 746.0 L704.0 745.6 L707.0 745.3 L710.0 745.0 L713.0 744.7 L716.0 744.3 L719.0 744.0 L722.0 743.7 L725.0 743.3 L728.0 743.0 L731.0 742.6 L734.0 742.3 L737.0 741.9 L740.0 741.5 L743.0 741.2 L746.0 740.8 L749.0 740.4 L752.0 740.1 L755.0 739.7 L758.0 739.3 L761.0 738.9 L764.0 738.5 L767.0 738.1 L770.0 737.7 L773.0 737.3 L776.0 736.9 L779.0 736.5 L782.0 736.1 L785.0 735.7 L788.0 735.3 L791.0 734.8 L794.0 734.4 L797.0 734.0 L800.0 733.5 L803.0 733.1 L806.0 732.7 L809.0 732.2 L812.0 731.7 L815.0 731.3 L818.0 730.8 L821.0 730.4 L824.0 729.9 L827.0 729.4 L830.0 728.9 L833.0 728.4 L836.0 727.9 L839.0 727.5 L842.0 727.0 L845.0 726.4 L848.0 725.9 L851.0 725.4 L854.0 724.9 L857.0 724.4 L860.0 723.9 L863.0 723.3 L866.0 722.8 L869.0 722.2 L872.0 721.7 L875.0 721.1 L878.0 720.6 L881.0 720.0 L884.0 719.4 L887.0 718.9 L890.0 718.3 L893.0 717.7 L896.0 717.1 L899.0 716.5 L902.0 715.9 L905.0 715.3 L908.0 714.7 L911.0 714.1 L914.0 713.4 L917.0 712.8 L920.0 712.2 L923.0 711.5 L926.0 710.9 L929.0 710.2 L932.0 709.6 L935.0 708.9 L938.0 708.2 L941.0 707.5 L944.0 706.9 L947.0 706.2 L950.0 705.5 L953.0 704.8 L956.0 704.1 L959.0 703.3 L962.0 702.6 L965.0 701.9 L968.0 701.1 L971.0 700.4 L974.0 699.7 L977.0 698.9 L980.0 698.1 L983.0 697.4 L986.0 696.6 L989.0 695.8 L992.0 695.0 L995.0 694.2 L998.0 693.4 L1001.0 692.6 L1004.0 691.8 L1007.0 691.0 L1010.0 690.1 L1013.0 689.3 L1016.0 688.4 L1019.0 687.6 L1022.0 686.7 L1025.0 685.9 L1028.0 685.0 L1031.0 684.1 L1034.0 683.2 L1037.0 682.3 L1040.0 681.4 L1043.0 680.5 L1046.0 679.6 L1049.0 678.6 L1052.0 677.7 L1055.0 676.7 L1058.0 675.8 L1061.0 674.8 L1064.0 673.8 L1067.0 672.9 L1070.0 671.9 L1073.0 670.9 L1076.0 669.9 L1079.0 668.9 L1082.0 667.9 L1085.0 666.8 L1088.0 665.8 L1091.0 664.7 L1094.0 663.7 L1097.0 662.6 L1100.0 661.5 L1103.0 660.5 L1106.0 659.4 L1109.0 658.3 L1112.0 657.2 L1115.0 656.1 L1118.0 654.9 L1121.0 653.8 L1124.0 652.7 L1127.0 651.5 L1130.0 650.3 L1133.0 649.2 L1136.0 648.0 L1139.0 646.8 L1142.0 645.6 L1145.0 644.4 L1148.0 643.2 L1151.0 641.9 L1154.0 640.7 L1157.0 639.5 L1160.0 638.2 L1163.0 636.9 L1166.0 635.7 L1169.0 634.4 L1172.0 633.1 L1175.0 631.8 L1178.0 630.5 L1181.0 629.2 L1184.0 627.8 L1187.0 626.5 L1190.0 625.1 L1193.0 623.8 L1196.0 622.4 L1199.0 621.0 L1202.0 619.6 L1205.0 618.2 L1208.0 616.8 L1211.0 615.4 L1214.0 613.9 L1217.0 612.5 L1220.0 611.0 L1223.0 609.6 L1226.0 608.1 L1229.0 606.6 L1232.0 605.1 L1235.0 603.6 L1238.0 602.1 L1241.0 600.6 L1244.0 599.0 L1247.0 597.5 L1250.0 595.9 L1253.0 594.3 L1256.0 592.8 L1259.0 591.2 L1262.0 589.6 L1265.0 588.0 L1268.0 586.3 L1271.0 584.7 L1274.0 583.1 L1277.0 581.4 L1280.0 579.7 L1283.0 578.1 L1286.0 576.4 L1289.0 574.7 L1292.0 573.0 L1295.0 571.2 L1298.0 569.5 L1301.0 567.8 L1304.0 566.0 L1307.0 564.3 L1310.0 562.5 L1313.0 560.7 L1316.0 558.9 L1319.0 557.1 L1322.0 555.3 L1325.0 553.4 L1328.0 551.6 L1331.0 549.8 L1334.0 547.9 L1337.0 546.0 L1340.0 544.1 L1343.0 542.3 L1346.0 540.3 L1349.0 538.4 L1352.0 536.5 L1355.0 534.6 L1358.0 532.6 L1361.0 530.7 L1364.0 528.7 L1367.0 526.7 L1370.0 524.7 L1373.0 522.7 L1376.0 520.7 L1379.0 518.7 L1382.0 516.7 L1385.0 514.6 L1388.0 512.6 L1391.0 510.5 L1394.0 508.4 L1397.0 506.4 L1400.0 504.3 L1403.0 502.2 L1406.0 500.0 L1409.0 497.9 L1412.0 495.8 L1415.0 493.6 L1418.0 491.5 L1421.0 489.3 L1424.0 487.1 L1427.0 485.0 L1430.0 482.8 L1433.0 480.6 L1436.0 478.3 L1439.0 476.1 L1442.0 473.9 L1445.0 471.6 L1448.0 469.4 L1451.0 467.1 L1454.0 464.9 L1457.0 462.6 L1460.0 460.3 L1463.0 458.0 L1466.0 455.7 L1469.0 453.4 L1472.0 451.0 L1475.0 448.7 L1478.0 446.4 L1481.0 444.0 L1484.0 441.6 L1487.0 439.3 L1490.0 436.9 L1493.0 434.5 L1496.0 432.1 L1499.0 429.7 L1502.0 427.3 L1505.0 424.9 L1508.0 422.4 L1511.0 420.0 L1514.0 417.6 L1517.0 415.1 L1520.0 412.7 L1523.0 410.2 L1526.0 407.7 L1529.0 405.2 L1532.0 402.8 L1535.0 400.3 L1538.0 397.8 L1541.0 395.3 L1544.0 392.7 L1547.0 390.2 L1550.0 387.7 L1553.0 385.2 L1556.0 382.6 L1559.0 380.1 L1562.0 377.5 L1565.0 375.0 L1568.0 372.4 L1571.0 369.8 L1574.0 367.2 L1577.0 364.7 L1580.0 362.1 L1583.0 359.5 L1586.0 356.9 L1589.0 354.3 L1592.0 351.7 L1595.0 349.1 L1598.0 346.5 L1601.0 343.8 L1604.0 341.2 L1607.0 338.6 L1610.0 335.9 L1613.0 333.3 L1616.0 330.7 L1619.0 328.0 L1622.0 325.4 L1625.0 322.7 L1628.0 320.1 L1631.0 317.4 L1634.0 314.8 L1637.0 312.1 L1640.0 309.4 L1643.0 306.8 L1646.0 304.1 L1649.0 301.4 L1652.0 298.8 L1655.0 296.1 L1658.0 293.4 L1661.0 290.7 L1664.0 288.0 L1667.0 285.4 L1670.0 282.7 L1673.0 280.0 L1676.0 277.3 L1679.0 274.6 L1682.0 271.9 L1685.0 269.3 L1688.0 266.6 L1691.0 263.9 L1694.0 261.2 L1697.0 258.5 L1700.0 255.8 L1703.0 253.1 L1706.0 250.5 L1709.0 247.8 L1712.0 245.1 L1715.0 242.4 L1718.0 239.7 L1721.0 237.1 L1724.0 234.4 L1727.0 231.7 L1730.0 229.0 L1733.0 226.4 L1736.0 223.7 L1739.0 221.0 L1742.0 218.3 L1745.0 215.7 L1748.0 213.0 L1751.0 210.4 L1754.0 207.7 L1757.0 205.1 L1760.0 202.4 L1763.0 199.8 L1766.0 197.1 L1769.0 194.5 L1772.0 191.9 L1775.0 189.2 L1778.0 186.6 L1781.0 184.0 L1784.0 181.4 L1787.0 178.7 L1790.0 176.1 L1793.0 173.5 L1796.0 170.9 L1799.0 168.3 L1802.0 165.7 L1805.0 163.2 L1808.0 160.6 L1811.0 158.0 L1814.0 155.4 L1817.0 152.9 L1820.0 150.3 L1823.0 147.8 L1826.0 145.2 L1829.0 142.7 L1832.0 140.2 L1835.0 137.6 L1838.0 135.1 L1841.0 132.6 L1844.0 130.1 L1847.0 127.6 L1850.0 125.1 L1853.0 122.6 L1856.0 120.1 L1859.0 117.7" fill="none" stroke="rgba(255,0,0,0.73)" stroke-width="3" stroke-linejoin="round"/>
</svg>
<div class="dd" style="left:551px;top:75px;width:172px;height:32px;border-top-color:#d0d0d0"><div class="t" style="left:9px;top:8.5px">График рассеяния</div><div class="ar" style="left:160px;top:12px"></div></div>
<div class="dd" style="left:734px;top:76px;width:32px;height:31px"></div>
<div class="dd" style="left:766px;top:76px;width:32px;height:31px"></div>
<svg class="a" style="left:734px;top:76px" width="64" height="31" viewBox="734 76 64 31"><path d="M751.66 84.85 L752.16 83.65" stroke="#8a8a8a" stroke-width="2.9" stroke-linecap="round"/><path d="M754.15 87.34 L755.35 86.84" stroke="#8a8a8a" stroke-width="2.9" stroke-linecap="round"/><path d="M754.15 90.86 L755.35 91.36" stroke="#8a8a8a" stroke-width="2.9" stroke-linecap="round"/><path d="M751.66 93.35 L752.16 94.55" stroke="#8a8a8a" stroke-width="2.9" stroke-linecap="round"/><path d="M748.14 93.35 L747.64 94.55" stroke="#8a8a8a" stroke-width="2.9" stroke-linecap="round"/><path d="M745.65 90.86 L744.45 91.36" stroke="#8a8a8a" stroke-width="2.9" stroke-linecap="round"/><path d="M745.65 87.34 L744.45 86.84" stroke="#8a8a8a" stroke-width="2.9" stroke-linecap="round"/><path d="M748.14 84.85 L747.64 83.65" stroke="#8a8a8a" stroke-width="2.9" stroke-linecap="round"/><circle cx="749.9" cy="89.1" r="4.3" fill="none" stroke="#8a8a8a" stroke-width="2.1"/><path d="M781 84.85 H773.85 V99.05 H788.05 V91.1" fill="none" stroke="#8a8a8a" stroke-width="1.7"/><path d="M780 92.6 L786 86.6" stroke="#8a8a8a" stroke-width="1.7"/><path d="M782.3 84 H788.9 V90.6 Z" fill="#8a8a8a"/></svg>
<div class="a" style="left:551px;top:113px;font-size:16px;color:#444">Y:</div>
<div class="fld" style="top:109px"><div class="a" style="left:2px;top:3.5px;font-size:16px;color:#777">B1:B17</div></div>
<div class="a" style="left:551px;top:847px;font-size:16px;color:#444">X:</div>
<div class="fld" style="top:843px"><div class="a" style="left:3px;top:3.5px;font-size:16px;color:#777">A1:A17</div></div>
<div class="a" style="left:1659px;top:75px;width:263px;height:43px;background:#fff;border:1px solid #dfdfdf;border-top:none;border-right:none;border-radius:0 0 0 7px;box-shadow:0 1px 2px rgba(0,0,0,.08)"></div>
<div class="sb" style="left:1665px;border-color:#6a6aff"></div>
<svg class="a" style="left:1665px;top:80px" width="32" height="32" viewBox="1665 80 32 32"><path d="M1680.6 91.2 V89 H1671 L1677 96.3 L1671 103.6 H1680.6 V101.4" fill="none" stroke="#000" stroke-width="2.1" stroke-linejoin="round" stroke-linecap="round"/><path d="M1683.4 95.2 L1691 103.8 M1691 95.2 L1683.4 103.8" stroke="#000" stroke-width="2" stroke-linecap="round"/></svg>
<div class="sb" style="left:1701px"></div>
<div class="a" style="left:1701px;top:85px;width:32px;text-align:center;font-size:13.2px;line-height:11.8px;color:#111;-webkit-text-stroke:0.35px #111;letter-spacing:-0.4px">123<br>345</div>
<div class="sb" style="left:1737px"></div>
<svg class="a" style="left:1737px;top:80px" width="32" height="32" viewBox="1737 80 32 32"><rect x="1743.3" y="86.2" width="19.6" height="7.6" rx="0.5" fill="none" stroke="#2a2a2a" stroke-width="2"/><rect x="1743.3" y="98.4" width="19.6" height="7.4" rx="0.5" fill="none" stroke="#2a2a2a" stroke-width="2"/></svg>

<div class="sb" style="left:1773px;width:56px"></div>
<div class="a" style="left:1777px;top:85px;font-size:16px;color:#333;white-space:nowrap">X</div><div class="a" style="left:1809.5px;top:85px;font-size:16px;color:#333;white-space:nowrap">Y</div><svg class="a" style="left:1790px;top:87px" width="17" height="15" viewBox="1790 87 17 15"><path d="M1793.2 92.4 H1804.3 M1796 89.7 L1793.2 92.4 L1796 95.1 M1793 97.4 H1804.1 M1801.3 94.7 L1804.1 97.4 L1801.3 100.1" fill="none" stroke="#222" stroke-width="1.15"/></svg>
<div class="a" style="left:1846px;top:84px;width:6px;height:5px;background:#999"></div>
<div class="a" style="left:1846px;top:93px;width:6px;height:5px;background:#999"></div>
<div class="a" style="left:1846px;top:102px;width:6px;height:5px;background:#999"></div>
<div class="a" style="left:1895px;top:86px;width:0;height:0;border-top:5px solid transparent;border-bottom:5px solid transparent;border-right:8px solid #c8c8c8"></div><div class="a" style="left:243px;top:879px;width:1677px;height:198px;background:#fff"></div>
<div class="a" style="left:243px;top:879px;font-size:16px;color:#6670f5;white-space:nowrap;line-height:19px">Регрессионная модель</div>
<div class="a" style="left:243px;top:903px;width:1677px;height:1px;background:#bcc2f6"></div>
<div class="dd" style="left:244px;top:935px;width:174px;height:32px"><div class="t" style="left:8px;top:7px">Никакой</div><div class="ar" style="left:162px;top:11px"></div></div>
<div class="a" style="left:437px;top:923px;font-size:15px;color:#222;white-space:nowrap">y</div><svg class="a" style="left:440px;top:920px" width="60" height="32" viewBox="440 920 60 32"><path d="M450 930.6 H460.8 M450 933.8 H460.8" stroke="#222" stroke-width="1.05"/><path d="M479.7 943.4 H490 M484.85 938 V948.2" stroke="#111" stroke-width="1.05"/></svg>
<div class="a" style="left:532px;top:912px;font-size:14.5px;color:#111;white-space:nowrap">49485.71587658993667</div>
<div class="a" style="left:467px;top:932px;width:288px;height:1px;background:#333"></div>
<div class="a" style="left:467px;top:934px;font-size:14.4px;color:#111;white-space:nowrap">1</div><div class="a" style="left:494px;top:934px;font-size:14.4px;color:#111;white-space:nowrap">96.939069491368002</div><div class="a" style="left:640px;top:934px;font-size:14.4px;color:#111;white-space:nowrap;font-style:italic">e</div>
<div class="a" style="left:648px;top:933.5px;font-size:10.3px;color:#111;white-space:nowrap">&#8722;0.213289737386324x</div>
<div class="a" style="left:430px;top:970px;font-size:15.8px;color:#333;white-space:nowrap">Вычислить:</div>
<div class="a" style="left:525px;top:969px;font-size:16px;color:#333;white-space:nowrap">x =</div>
<div class="a" style="left:558px;top:966px;width:95px;height:26px;border:1px solid #6262ff;border-radius:5px;background:#fff"></div>
<div class="a" style="left:559px;top:970px;font-size:16px;color:#888;white-space:nowrap">21</div>
<div class="a" style="left:578px;top:970px;width:1px;height:18px;background:#222"></div>
<div class="a" style="left:663px;top:969px;font-size:16px;color:#333;white-space:nowrap">y =</div>
<div class="a" style="left:704px;top:970px;font-size:16px;color:#333;white-space:nowrap">23568.478181470258278</div>
<div class="a" style="left:0;top:1078px;width:1920px;height:2px;background:#d0dcea;border-top:1px solid #7f93a8"></div>
</body></html>
